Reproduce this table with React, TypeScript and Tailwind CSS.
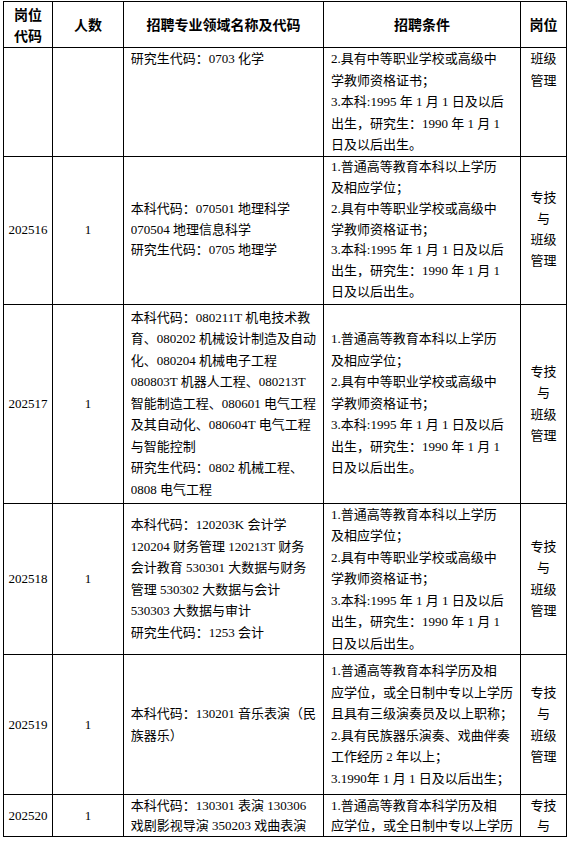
const std = [
  "1.普通高等教育本科以上学历",
  "及相应学位；",
  "2.具有中等职业学校或高级中",
  "学教师资格证书；",
  "3.本科:1995 年 1 月 1 日及以后",
  "出生，研究生：1990 年 1 月 1",
  "日及以后出生。",
];

const post = ["专技", "与", "班级", "管理"];

type Row = {
  code: string;
  num: string;
  major: string[];
  cond: string[];
  post: string[];
  h: string;
  lead?: string;
  top?: boolean;
};

const rows: Row[] = [
  {
    code: "",
    num: "",
    major: ["研究生代码：0703 化学"],
    cond: std.slice(2),
    post: ["班级", "管理"],
    h: "h-[108px]",
    top: true,
  },
  {
    code: "202516",
    num: "1",
    major: ["本科代码：070501 地理科学", "070504 地理信息科学", "研究生代码：0705 地理学"],
    cond: std,
    post,
    h: "h-[148px]",
    lead: "leading-[20.9px]",
  },
  {
    code: "202517",
    num: "1",
    major: [
      "本科代码：080211T 机电技术教",
      "育、080202 机械设计制造及自动",
      "化、080204 机械电子工程",
      "080803T 机器人工程、080213T",
      "智能制造工程、080601 电气工程",
      "及其自动化、080604T 电气工程",
      "与智能控制",
      "研究生代码：0802 机械工程、",
      "0808 电气工程",
    ],
    cond: std,
    post,
    h: "h-[199px]",
  },
  {
    code: "202518",
    num: "1",
    major: [
      "本科代码：120203K 会计学",
      "120204 财务管理 120213T 财务",
      "会计教育 530301 大数据与财务",
      "管理 530302 大数据与会计",
      "530303 大数据与审计",
      "研究生代码：1253 会计",
    ],
    cond: std,
    post,
    h: "h-[151px]",
  },
  {
    code: "202519",
    num: "1",
    major: ["本科代码：130201 音乐表演（民", "族器乐）"],
    cond: [
      "1.普通高等教育本科学历及相",
      "应学位，或全日制中专以上学历",
      "且具有三级演奏员及以上职称；",
      "2.具有民族器乐演奏、戏曲伴奏",
      "工作经历 2 年以上；",
      "3.1990年 1 月 1 日及以后出生；",
    ],
    post,
    h: "h-[140px]",
  },
  {
    code: "202520",
    num: "1",
    major: ["本科代码：130301 表演 130306", "戏剧影视导演 350203 戏曲表演"],
    cond: ["1.普通高等教育本科学历及相", "应学位，或全日制中专以上学历"],
    post: ["专技", "与"],
    h: "h-[42px]",
    lead: "leading-[20px]",
  },
];

function Lines({ lines, center }: { lines: string[]; center?: boolean }) {
  return (
    <div className={center ? "text-center" : "text-left"}>
      {lines.map((l, i) => (
        <div key={i} className="whitespace-nowrap">
          {l}
        </div>
      ))}
    </div>
  );
}

export default function App() {
  const cell = "border border-black p-0";
  return (
    <div className="min-h-[842px] bg-white pl-[3px] pt-[1px] text-[13px] leading-[21.5px] text-black [font-family:'Liberation_Serif','Noto_Sans_CJK_SC',serif]">
      <table className="table-fixed border-collapse">
        <colgroup>
          <col className="w-[51px]" />
          <col className="w-[83px]" />
          <col className="w-[188px]" />
          <col className="w-[187px]" />
          <col className="w-[50px]" />
        </colgroup>
        <thead>
          <tr className="h-[46px] font-bold [font-family:'Noto_Sans_CJK_SC',sans-serif] text-[14px] leading-[21px]">
            <th className={`${cell} text-center align-middle`}>
              岗位
              <br />
              代码
            </th>
            <th className={`${cell} text-center align-middle`}>人数</th>
            <th className={`${cell} text-center align-middle`}>招聘专业领域名称及代码</th>
            <th className={`${cell} text-center align-middle`}>招聘条件</th>
            <th className={`${cell} text-center align-middle`}>岗位</th>
          </tr>
        </thead>
        <tbody>
          {rows.map((r, i) => {
            const va = r.top ? "align-top" : "align-middle";
            return (
              <tr key={i} className={`${r.h} ${r.lead ?? ""}`}>
                <td className={`${cell} ${va} text-center`}>{r.code}</td>
                <td className={`${cell} ${va} text-center`}>{r.num}</td>
                <td className={`${cell} ${va} px-[7px]`}>
                  <div className="overflow-hidden">
                    <Lines lines={r.major} />
                  </div>
                </td>
                <td className={`${cell} ${va} px-[7px]`}>
                  <div className="overflow-hidden">
                    <Lines lines={r.cond} />
                  </div>
                </td>
                <td className={`${cell} ${va}`}>
                  <Lines lines={r.post} center />
                </td>
              </tr>
            );
          })}
        </tbody>
      </table>
    </div>
  );
}
